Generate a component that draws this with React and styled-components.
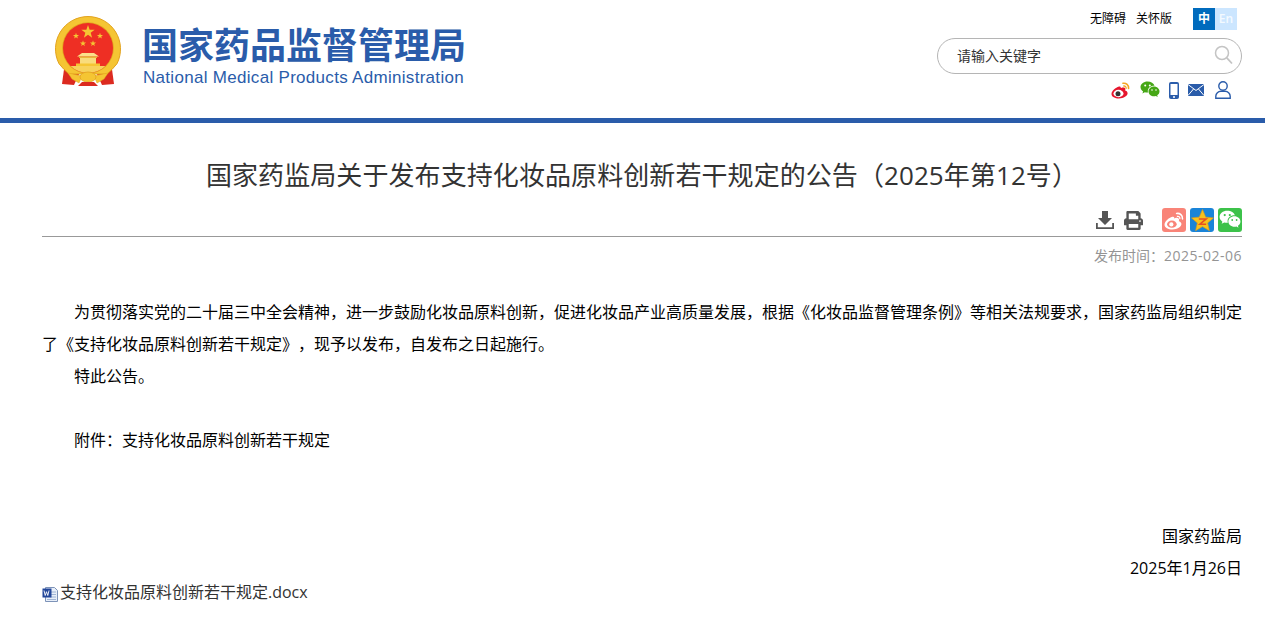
import styled, {createGlobalStyle} from 'styled-components'
import {FaPrint} from 'react-icons/fa'

const cjk = `"Open Sans", "Noto Sans CJK SC", sans-serif`
const blue = '#2a5caa'

const GlobalStyle = createGlobalStyle`
  html, body {
    margin: 0;
    padding: 0;
    background: #fff;
    font-family: ${cjk};
    text-spacing-trim: space-all;
  }
`

const Header = styled.header`
  height: 118px;
  border-bottom: 5px solid ${blue};
  padding: 0 23px 0 55px;
  display: flex;
  justify-content: space-between;
`

const Brand = styled.div`
  display: flex;
  align-items: flex-start;
  gap: 22px;
  padding-top: 16px;
`

const BrandText = styled.div`
  display: flex;
  flex-direction: column;
  width: 322px;
`

const BrandCn = styled.div`
  font-family: "Noto Sans CJK SC", sans-serif;
  font-size: 36px;
  line-height: 42px;
  margin-top: 6px;
  margin-left: -1px;
  font-weight: 700;
  color: ${blue};
  white-space: nowrap;
`

const BrandEn = styled.div`
  font-family: "Liberation Sans", sans-serif;
  font-size: 17px;
  line-height: 20px;
  margin-top: 4px;
  letter-spacing: 0.3px;
  color: ${blue};
  white-space: nowrap;
`

const Tools = styled.div`
  width: 305px;
  display: flex;
  flex-direction: column;
  align-items: stretch;
`

const TopLinks = styled.div`
  height: 30px;
  padding-top: 8px;
  box-sizing: border-box;
  display: flex;
  justify-content: flex-end;
  align-items: flex-start;
  font-size: 12px;
  color: #000;
`

const TopLink = styled.a`
  line-height: 21px;
  margin-right: 10px;
`

const Lang = styled.a`
  width: 22px;
  height: 22px;
  line-height: 22px;
  text-align: center;
  font-size: 12px;
  font-weight: 600;
  margin-left: ${p => (p.$first ? '11px' : '0')};
  margin-right: ${p => (p.$first ? '0' : '5px')};
  color: ${p => (p.$active ? '#fff' : '#f4faff')};
  background: ${p => (p.$active ? '#006bbd' : '#cce6ff')};
`

const Search = styled.div`
  height: 36px;
  margin-top: 8px;
  box-sizing: border-box;
  border: 1px solid #b5b5b5;
  border-radius: 18px;
  padding: 0 8px 2px 19px;
  display: flex;
  align-items: center;
  justify-content: space-between;
  font-size: 14px;
  color: #333;
`

const IconRow = styled.div`
  display: flex;
  justify-content: flex-end;
  align-items: center;
  height: 20px;
  margin-top: 6px;
  padding-right: 11px;
`

const IconSlot = styled.span`
  display: flex;
  margin-left: ${p => p.$gap}px;
`

const Main = styled.main`
  width: 1200px;
  margin-left: 42px;
`

const Title = styled.h1`
  margin: 0;
  padding-top: 33px;
  font-size: 26px;
  line-height: 38px;
  font-weight: 400;
  letter-spacing: 0.08px;
  color: #333;
  text-align: center;
  white-space: nowrap;
`

const ActionBar = styled.div`
  height: 28px;
  margin-top: 14px;
  display: flex;
  justify-content: flex-end;
  align-items: flex-start;
  border-bottom: 1px solid #999;
`

const ActionIcon = styled.span`
  display: flex;
  color: #555;
  font-size: 19px;
  margin: 3px 0 0 ${p => p.$gap}px;
`

const ShareIcon = styled.span`
  width: 24px;
  height: 24px;
  margin-left: ${p => p.$gap}px;
  border-radius: 3px;
  background: ${p => p.$bg};
  display: flex;
  align-items: center;
  justify-content: center;
`

const PubDate = styled.div`
  margin-top: 9px;
  text-align: right;
  font-size: 14px;
  line-height: 20px;
  color: #949494;
`

const DateValue = styled.span`
  letter-spacing: 0.5px;
`

const Article = styled.article`
  margin-top: 30px;
  font-size: 16px;
  line-height: 32px;
  color: #000;
`

const Para = styled.p`
  margin: 0;
  min-height: 32px;
  text-indent: ${p => (p.$right ? '0' : '32px')};
  text-align: ${p => (p.$right ? 'right' : 'justify')};
`

const Attachment = styled.a`
  display: flex;
  align-items: flex-start;
  gap: 1px;
  font-size: 16px;
  line-height: 16px;
  color: #333;
`

function starPath(cx, cy, r) {
  const pts = []
  for (let i = 0; i < 10; i++) {
    const rad = i % 2 ? r * 0.4 : r
    const a = (Math.PI / 5) * i - Math.PI / 2
    pts.push(`${(cx + rad * Math.cos(a)).toFixed(2)} ${(cy + rad * Math.sin(a)).toFixed(2)}`)
  }
  return `M${pts.join('L')}Z`
}

function Emblem() {
  const gold = '#f5c533'
  const dark = '#e2a21e'
  return (
    <svg width="66" height="70" viewBox="0 0 66 70">
      <defs>
        <clipPath id="shield">
          <circle cx="33" cy="32" r="25" />
        </clipPath>
      </defs>
      <path d="M10 46 L7 68 L19 69 L25 56Z" fill="#dc2a20" />
      <path d="M56 46 L59 68 L47 69 L41 56Z" fill="#dc2a20" />
      <path d="M4 47.700 A32.500 32.500 0 1 1 62 47.700 Q57 54 52 58 H14 Q9 54 4 47.700Z" fill={gold} stroke={dark} strokeWidth="1" />
      <circle cx="33" cy="32" r="25.800" fill={dark} />
      <circle cx="33" cy="32" r="25" fill="#ee2f24" />
      <path d={starPath(33, 16, 7)} fill={gold} />
      <path d={starPath(21, 20, 3.2)} fill={gold} />
      <path d={starPath(45, 20, 3.2)} fill={gold} />
      <path d={starPath(28, 27.500, 3.2)} fill={gold} />
      <path d={starPath(38, 27.500, 3.2)} fill={gold} />
      <g clipPath="url(#shield)">
        <rect x="0" y="50" width="66" height="10" fill="#f7d25c" />
        <path d="M27 37h12l5 3.500H22z" fill="#fbe08a" />
        <path d="M24 40.500h18v1.500H24z" fill="#e8b93a" />
        <path d="M25 42h16v6H25z" fill="#f9dc7c" />
        <path d="M21 47.500h24v2.500H21z" fill="#f5c533" />
      </g>
      <path d="M13 57 L27 60 L24 67 L17 63Z" fill={gold} stroke={dark} strokeWidth=".5" />
      <path d="M53 57 L39 60 L42 67 L49 63Z" fill={gold} stroke={dark} strokeWidth=".5" />
      <ellipse cx="33" cy="61" rx="8" ry="5" fill={gold} stroke={dark} strokeWidth=".8" />
      <path d="M23 70 L27 66 H39 L43 70Z" fill="#dc2a20" />
    </svg>
  )
}

function SearchIcon() {
  return (
    <svg width="20" height="20" viewBox="0 0 20 20" fill="none" stroke="#c4c4c4">
      <circle cx="9" cy="8" r="6.500" strokeWidth="1.500" />
      <path d="M13.800 12.800 L19 18.500" strokeWidth="1.800" />
    </svg>
  )
}

function WeiboColor() {
  return (
    <svg width="20" height="18" viewBox="0 0 20 18">
      <path d="M8 5.500C4.500 6.500.5 10 .5 13c0 2.800 3.600 4.500 7.500 4.500 4.600 0 8.600-2.600 8.600-5.200 0-1.600-1.400-2.400-2.500-2.700.5-1.300.4-2.500-1-3-1.200-.4-2.700.2-3.400.5.200-1 .2-2-1.700-1.600z" fill="#e6162d" />
      <ellipse cx="7.500" cy="12.500" rx="5" ry="3.700" fill="#fff" />
      <circle cx="7" cy="12.700" r="2.500" fill="#333" />
      <path d="M12 2.300c3-.6 6 1.800 5.600 5.200" fill="none" stroke="#f5a623" strokeWidth="1.600" strokeLinecap="round" />
      <path d="M12.800 5c1.500-.2 2.500 1 2.300 2.300" fill="none" stroke="#f5a623" strokeWidth="1.300" strokeLinecap="round" />
    </svg>
  )
}

function WeiboWhite() {
  return (
    <svg width="21" height="19" viewBox="0 0 20 18">
      <path d="M8 5.500C4.500 6.500.5 10 .5 13c0 2.800 3.600 4.500 7.500 4.500 4.600 0 8.600-2.600 8.600-5.200 0-1.600-1.400-2.400-2.500-2.700.5-1.300.4-2.500-1-3-1.200-.4-2.700.2-3.400.5.200-1 .2-2-1.700-1.600z" fill="#fff" />
      <ellipse cx="7.500" cy="12.500" rx="4.600" ry="3.400" fill="#f98478" />
      <circle cx="7" cy="12.700" r="2" fill="#fff" />
      <path d="M12 2.300c3-.6 6 1.800 5.600 5.200" fill="none" stroke="#fff" strokeWidth="1.500" strokeLinecap="round" />
      <path d="M12.800 5c1.500-.2 2.500 1 2.300 2.300" fill="none" stroke="#fff" strokeWidth="1.200" strokeLinecap="round" />
    </svg>
  )
}

function Wechat({bubble, eye, size}) {
  return (
    <svg width={size} height={size} viewBox="0 0 20 20">
      <path d="M7.500 1.500C3.600 1.500.5 4 .5 7.100c0 1.800 1 3.300 2.600 4.400L2.400 13.500l2.400-1.300c.8.2 1.700.4 2.700.4h.6c-.2-.5-.3-1.100-.3-1.700 0-2.900 2.800-5.200 6.200-5.200h.5C13.800 3.200 11 1.500 7.500 1.500z" fill={bubble} />
      <path d="M19.500 11.400c0-2.600-2.500-4.800-5.500-4.800s-5.500 2.200-5.500 4.800 2.500 4.800 5.500 4.800c.7 0 1.300-.1 1.900-.3l1.800 1.200-.5-1.900c1.400-.8 2.300-2.300 2.300-3.800z" fill={bubble} />
      <circle cx="5.200" cy="5.500" r="1" fill={eye} />
      <circle cx="9.800" cy="5.500" r="1" fill={eye} />
      <circle cx="12" cy="10" r=".8" fill={eye} />
      <circle cx="16" cy="10" r=".8" fill={eye} />
    </svg>
  )
}

function Phone() {
  return (
    <svg width="10" height="17" viewBox="0 0 10 17">
      <rect width="10" height="17" rx="2" fill={blue} />
      <rect x="1.500" y="2" width="7" height="11" fill="#fff" />
      <circle cx="5" cy="15" r="1" fill="#fff" />
    </svg>
  )
}

function Mail() {
  return (
    <svg width="16" height="12" viewBox="0 0 16 12">
      <rect width="16" height="12" fill={blue} />
      <path d="M0 .5 L8 6.500 L16 .5 M0 11.500 L5.500 5 M16 11.500 L10.500 5" fill="none" stroke="#fff" strokeWidth="1" />
    </svg>
  )
}

function User() {
  return (
    <svg width="16" height="18" viewBox="0 0 16 18" fill="none" stroke={blue} strokeWidth="1.400">
      <circle cx="8" cy="5" r="4.200" />
      <path d="M.8 17.300v-2c0-3 2.500-5 5-5h4.400c2.500 0 5 2 5 5v2z" />
    </svg>
  )
}

function Download() {
  return (
    <svg width="18" height="18" viewBox="0 0 18 18" fill="#555">
      <path d="M6 0h6v7h4l-7 7-7-7h4z" />
      <path d="M0 12h1.800v4.200h14.400V12H18v6H0z" />
    </svg>
  )
}

function Qzone() {
  return (
    <svg width="23" height="23" viewBox="0 0 22 22">
      <path d="M11 .5l3.100 7.300 7.400.7-5.600 4.800 1.700 7.400L11 16.800l-6.600 3.900 1.700-7.400L.5 8.500l7.400-.7z" fill="#f7c21c" stroke="#e89b10" strokeWidth=".6" />
      <path d="M7.500 9.500h7L8.500 14.500h6" fill="none" stroke="#e8501f" strokeWidth="1.500" />
    </svg>
  )
}

function DocIcon() {
  return (
    <svg width="17" height="17" viewBox="0 0 17 17" style={{flexShrink: 0, marginTop: 2}}>
      <path d="M3.500 1.500h9l3 3v11h-12z" fill="#e8eff9" stroke="#7d93b8" />
      <path d="M8 6h6M8 8.500h6M8 11h6M5 13.500h9" stroke="#8ea6cc" strokeWidth=".8" />
      <rect x="0.500" y="2.500" width="9" height="9" fill="#23479a" />
      <path d="M2 4.500l1.200 5 1.300-3.800 1.300 3.800 1.200-5" fill="none" stroke="#fff" strokeWidth=".9" />
    </svg>
  )
}

export default function App() {
  return (
    <>
      <GlobalStyle />
      <Header>
        <Brand>
          <Emblem />
          <BrandText>
            <BrandCn>国家药品监督管理局</BrandCn>
            <BrandEn>National Medical Products Administration</BrandEn>
          </BrandText>
        </Brand>
        <Tools>
          <TopLinks>
            <TopLink>无障碍</TopLink>
            <TopLink>关怀版</TopLink>
            <Lang $first $active>中</Lang>
            <Lang>En</Lang>
          </TopLinks>
          <Search>
            <span>请输入关键字</span>
            <SearchIcon />
          </Search>
          <IconRow>
            <IconSlot $gap={0}><WeiboColor /></IconSlot>
            <IconSlot $gap={9}><Wechat size={20} bubble="#46a716" eye="#fff" /></IconSlot>
            <IconSlot $gap={9}><Phone /></IconSlot>
            <IconSlot $gap={9}><Mail /></IconSlot>
            <IconSlot $gap={11}><User /></IconSlot>
          </IconRow>
        </Tools>
      </Header>
      <Main>
        <Title>国家药监局关于发布支持化妆品原料创新若干规定的公告（2025年第12号）</Title>
        <ActionBar>
          <ActionIcon $gap={0}><Download /></ActionIcon>
          <ActionIcon $gap={10}><FaPrint /></ActionIcon>
          <ShareIcon $gap={19} $bg="#f98478"><WeiboWhite /></ShareIcon>
          <ShareIcon $gap={4} $bg="#1a84d8"><Qzone /></ShareIcon>
          <ShareIcon $gap={4} $bg="#3cc24a"><Wechat size={22} bubble="#fff" eye="#3cc24a" /></ShareIcon>
        </ActionBar>
        <PubDate>发布时间：<DateValue>2025-02-06</DateValue></PubDate>
        <Article>
          <Para>为贯彻落实党的二十届三中全会精神，进一步鼓励化妆品原料创新，促进化妆品产业高质量发展，根据《化妆品监督管理条例》等相关法规要求，国家药监局组织制定了《支持化妆品原料创新若干规定》，现予以发布，自发布之日起施行。</Para>
          <Para>特此公告。</Para>
          <Para />
          <Para>附件：支持化妆品原料创新若干规定</Para>
          <Para />
          <Para />
          <Para $right>国家药监局</Para>
          <Para $right>2025年1月26日</Para>
        </Article>
        <Attachment><DocIcon />支持化妆品原料创新若干规定.docx</Attachment>
      </Main>
    </>
  )
}
